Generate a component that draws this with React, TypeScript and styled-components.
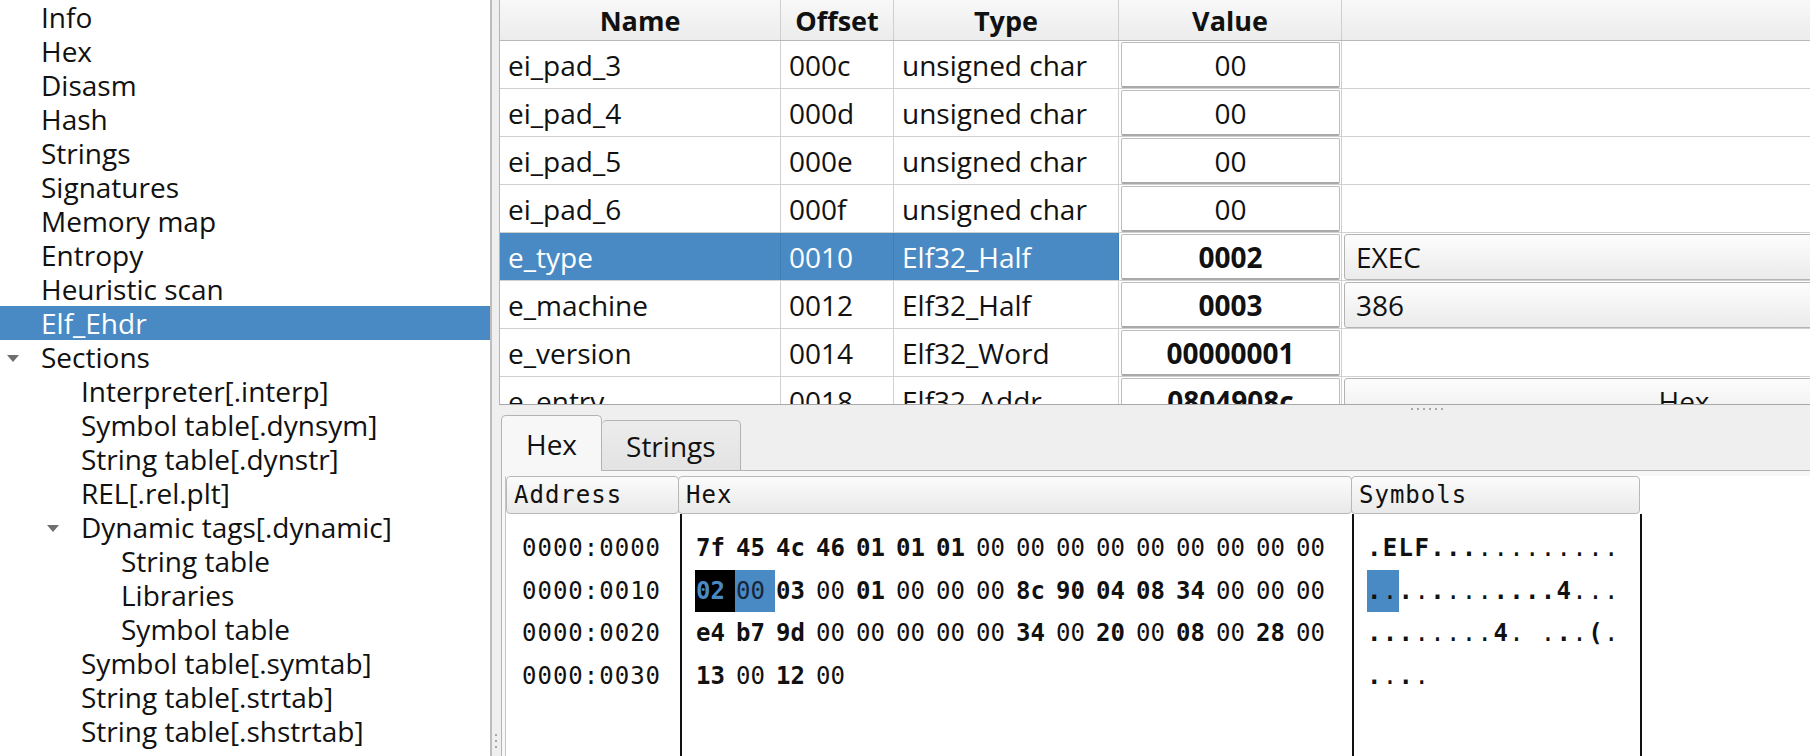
import React from 'react';
import styled, { createGlobalStyle, css } from 'styled-components';

const SANS = `"Open Sans", "Noto Sans", "DejaVu Sans", sans-serif`;
const MONO = `"DejaVu Sans Mono", "Liberation Mono", monospace`;
const BLUE = '#4a8ac4';

const GlobalStyle = createGlobalStyle`
  html, body { margin: 0; padding: 0; overflow: hidden; background: #efefef; }
  #root { width: 1810px; height: 756px; overflow: hidden; }
`;

const Window = styled.div`
  display: flex;
  width: 1810px;
  height: 756px;
  overflow: hidden;
  background: #efefef;
  font-family: ${SANS};
  color: #111;
`;

/* ---------- tree ---------- */
const TreePanel = styled.div`
  width: 490px;
  flex-shrink: 0;
  background: #fff;
  border-right: 2px solid #bdbdbd;
  display: flex;
  flex-direction: column;
`;

const TreeRow = styled.div<{ $depth: number; $selected?: boolean }>`
  height: 34px;
  display: flex;
  align-items: center;
  padding-left: ${(p) => 7 + p.$depth * 40}px;
  font-size: 28px;
  line-height: 34px;
  white-space: nowrap;
  color: ${(p) => (p.$selected ? '#fff' : '#111')};
  background: ${(p) => (p.$selected ? BLUE : 'transparent')};
`;

const ArrowSlot = styled.div`
  width: 34px;
  flex-shrink: 0;
  display: flex;
  align-items: center;
`;

const DownArrow = styled.div`
  width: 0;
  height: 0;
  border-left: 6px solid transparent;
  border-right: 6px solid transparent;
  border-top: 7px solid #6e6e6e;
  margin-top: 2px;
`;

const SplitterV = styled.div`
  width: 7px;
  flex-shrink: 0;
  display: flex;
  flex-direction: column;
  justify-content: flex-end;
  align-items: center;
  padding-bottom: 8px;
  gap: 4px;
`;

const Dot = styled.div`
  width: 2px;
  height: 2px;
  background: #a8a8a8;
`;

/* ---------- right pane ---------- */
const RightPane = styled.div`
  width: 1856px;
  flex-shrink: 0;
  display: flex;
  flex-direction: column;
`;

const COLS = '281px 113px 225px 223px 684px';

const TableFrame = styled.div`
  height: 405px;
  flex-shrink: 0;
  box-sizing: border-box;
  border-left: 1px solid #b4b4b4;
  border-bottom: 1px solid #a8a8a8;
  background: #fff;
  overflow: hidden;
`;

const HeaderRow = styled.div`
  display: grid;
  grid-template-columns: ${COLS};
  height: 41px;
  box-sizing: border-box;
  border-bottom: 1px solid #b9b9b9;
`;

const HeaderCell = styled.div`
  display: flex;
  align-items: center;
  justify-content: center;
  box-sizing: border-box;
  border-right: 1px solid #cfcfcf;
  background: linear-gradient(#f8f8f8, #ececec);
  font-weight: 700;
  font-size: 27px;
`;

const DataRow = styled.div`
  display: grid;
  grid-template-columns: ${COLS};
  height: 48px;
  box-sizing: border-box;
  border-bottom: 1px solid #d0d0d0;
`;

const Cell = styled.div<{ $selected?: boolean }>`
  display: flex;
  align-items: center;
  box-sizing: border-box;
  padding-left: 8px;
  border-right: 1px solid ${(p) => (p.$selected ? '#3f7db5' : '#d0d0d0')};
  font-size: 28px;
  white-space: nowrap;
  overflow: hidden;
  color: ${(p) => (p.$selected ? '#fff' : '#111')};
  background: ${(p) => (p.$selected ? BLUE : '#fff')};
`;

const WidgetCell = styled.div`
  display: flex;
  box-sizing: border-box;
  padding: 1px 1px 0 2px;
  border-right: 1px solid #d0d0d0;
  overflow: hidden;
`;

const ValueBox = styled.div<{ $bold?: boolean }>`
  flex: 1;
  display: flex;
  align-items: center;
  justify-content: center;
  box-sizing: border-box;
  background: #fff;
  border: 1px solid #bdbdbd;
  border-bottom: 2px solid #a9a9a9;
  border-radius: 2px;
  font-size: 28px;
  font-weight: ${(p) => (p.$bold ? 700 : 400)};
  white-space: nowrap;
`;

const ComboBox = styled.div<{ $center?: boolean }>`
  flex: 1;
  display: flex;
  align-items: center;
  box-sizing: border-box;
  padding-left: 11px;
  border: 1px solid #b3b3b3;
  border-radius: 3px;
  background: linear-gradient(#fdfdfd, #ebebeb);
  font-size: 28px;
  white-space: nowrap;
  ${(p) =>
    p.$center &&
    css`
      justify-content: center;
      padding-left: 0;
    `}
`;

const SplitterH = styled.div`
  height: 10px;
  flex-shrink: 0;
  display: flex;
  justify-content: center;
  align-items: flex-start;
  padding-top: 3px;
  box-sizing: border-box;
  gap: 4px;
`;

/* ---------- tabs ---------- */
const TabSection = styled.div`
  flex: 1;
  display: flex;
  flex-direction: column;
  margin-left: 2px;
  min-height: 0;
`;

const TabBar = styled.div`
  height: 55px;
  flex-shrink: 0;
  display: flex;
  align-items: flex-end;
`;

const Tab = styled.div<{ $active?: boolean }>`
  display: flex;
  align-items: center;
  justify-content: center;
  box-sizing: border-box;
  padding: 0 24px;
  font-size: 28px;
  border: 1px solid #b3b3b3;
  border-radius: 5px 5px 0 0;
  ${(p) =>
    p.$active
      ? css`
          height: 56px;
          margin-bottom: -1px;
          border-bottom: none;
          background: #f7f7f7;
          position: relative;
          z-index: 1;
        `
      : css`
          height: 50px;
          border-left: none;
          border-bottom: none;
          background: linear-gradient(#ececec, #e3e3e3);
        `}
`;

const TabPane = styled.div`
  flex: 1;
  border-top: 1px solid #b3b3b3;
  border-left: 1px solid #b3b3b3;
  background: #f7f7f7;
  padding: 5px 0 0 3px;
  display: flex;
  min-height: 0;
`;

const HexView = styled.div`
  flex: 1;
  background: #fff;
  border-left: 1px solid #c4c4c4;
  display: flex;
  flex-direction: column;
  font-family: ${MONO};
  font-size: 24px;
  color: #111;
`;

const HexHeader = styled.div`
  display: grid;
  grid-template-columns: 172px 673px 288px;
  height: 38px;
  flex-shrink: 0;
`;

const HexHeaderCell = styled.div`
  display: flex;
  align-items: center;
  box-sizing: border-box;
  padding-left: 7px;
  border: 1px solid #b8b8b8;
  border-radius: 4px;
  background: linear-gradient(#fbfbfb, #e9e9e9);
  letter-spacing: 1px;
  margin-right: -1px;
`;

const HexBody = styled.div`
  flex: 1;
  display: grid;
  grid-template-columns: 174px 672px 290px;
  align-items: stretch;
`;

const AddrCol = styled.div`
  padding: 13px 0 0 16px;
`;

const BytesCol = styled.div`
  border-left: 2px solid #111;
  padding: 13px 0 0 13px;
`;

const SymCol = styled.div`
  border-left: 2px solid #111;
  border-right: 2px solid #111;
  padding: 13px 0 0 13px;
`;

const HexLine = styled.div`
  height: 42.5px;
  display: flex;
  align-items: center;
  white-space: pre;
`;

const AddrText = styled.span`
  letter-spacing: 1px;
`;

const Byte = styled.span<{ $bold?: boolean; $mode?: 'cursor' | 'sel' | 'none' }>`
  display: inline-flex;
  align-items: center;
  width: 40px;
  height: 100%;
  padding-left: 1px;
  box-sizing: border-box;
  font-weight: ${(p) => (p.$bold ? 700 : 400)};
  ${(p) =>
    p.$mode === 'cursor' &&
    css`
      background: #000;
      color: ${BLUE};
    `}
  ${(p) =>
    p.$mode === 'sel' &&
    css`
      background: ${BLUE};
      color: #16263a;
    `}
`;

const SymChar = styled.span<{ $bold?: boolean; $sel?: boolean }>`
  display: inline-flex;
  align-items: center;
  width: 15.8px;
  height: 100%;
  font-weight: ${(p) => (p.$bold ? 700 : 400)};
  background: ${(p) => (p.$sel ? BLUE : 'transparent')};
`;

/* ---------- data ---------- */
type TreeItem = { label: string; depth: number; expanded?: boolean; selected?: boolean };

const treeItems: TreeItem[] = [
  { label: 'Info', depth: 0 },
  { label: 'Hex', depth: 0 },
  { label: 'Disasm', depth: 0 },
  { label: 'Hash', depth: 0 },
  { label: 'Strings', depth: 0 },
  { label: 'Signatures', depth: 0 },
  { label: 'Memory map', depth: 0 },
  { label: 'Entropy', depth: 0 },
  { label: 'Heuristic scan', depth: 0 },
  { label: 'Elf_Ehdr', depth: 0, selected: true },
  { label: 'Sections', depth: 0, expanded: true },
  { label: 'Interpreter[.interp]', depth: 1 },
  { label: 'Symbol table[.dynsym]', depth: 1 },
  { label: 'String table[.dynstr]', depth: 1 },
  { label: 'REL[.rel.plt]', depth: 1 },
  { label: 'Dynamic tags[.dynamic]', depth: 1, expanded: true },
  { label: 'String table', depth: 2 },
  { label: 'Libraries', depth: 2 },
  { label: 'Symbol table', depth: 2 },
  { label: 'Symbol table[.symtab]', depth: 1 },
  { label: 'String table[.strtab]', depth: 1 },
  { label: 'String table[.shstrtab]', depth: 1 },
];

type Field = {
  name: string;
  offset: string;
  type: string;
  value: string;
  bold?: boolean;
  extra?: string;
  extraCenter?: boolean;
  selected?: boolean;
};

const fields: Field[] = [
  { name: 'ei_pad_3', offset: '000c', type: 'unsigned char', value: '00' },
  { name: 'ei_pad_4', offset: '000d', type: 'unsigned char', value: '00' },
  { name: 'ei_pad_5', offset: '000e', type: 'unsigned char', value: '00' },
  { name: 'ei_pad_6', offset: '000f', type: 'unsigned char', value: '00' },
  { name: 'e_type', offset: '0010', type: 'Elf32_Half', value: '0002', bold: true, extra: 'EXEC', selected: true },
  { name: 'e_machine', offset: '0012', type: 'Elf32_Half', value: '0003', bold: true, extra: '386' },
  { name: 'e_version', offset: '0014', type: 'Elf32_Word', value: '00000001', bold: true },
  { name: 'e_entry', offset: '0018', type: 'Elf32_Addr', value: '0804908c', bold: true, extra: 'Hex', extraCenter: true },
];

const hexRows: string[][] = [
  '7f 45 4c 46 01 01 01 00 00 00 00 00 00 00 00 00'.split(' '),
  '02 00 03 00 01 00 00 00 8c 90 04 08 34 00 00 00'.split(' '),
  'e4 b7 9d 00 00 00 00 00 34 00 20 00 08 00 28 00'.split(' '),
  '13 00 12 00'.split(' '),
];

const CURSOR = 16;
const SELECTED = [16, 17];

const symbolOf = (b: string) => {
  const v = parseInt(b, 16);
  if (v === 0x20) return '\u00a0';
  if (v > 0x20 && v < 0x7f) return String.fromCharCode(v);
  return '.';
};

const Dots: React.FC<{ n: number }> = ({ n }) => (
  <>
    {Array.from({ length: n }).map((_, i) => (
      <Dot key={i} />
    ))}
  </>
);

export default function App() {
  return (
    <Window>
      <GlobalStyle />
      <TreePanel>
        {treeItems.map((t, i) => (
          <TreeRow key={i} $depth={t.depth} $selected={t.selected}>
            <ArrowSlot>{t.expanded && <DownArrow />}</ArrowSlot>
            {t.label}
          </TreeRow>
        ))}
      </TreePanel>
      <SplitterV>
        <Dots n={3} />
      </SplitterV>
      <RightPane>
        <TableFrame>
          <HeaderRow>
            <HeaderCell>Name</HeaderCell>
            <HeaderCell>Offset</HeaderCell>
            <HeaderCell>Type</HeaderCell>
            <HeaderCell>Value</HeaderCell>
            <HeaderCell />
          </HeaderRow>
          {fields.map((f) => (
            <DataRow key={f.name}>
              <Cell $selected={f.selected}>{f.name}</Cell>
              <Cell $selected={f.selected}>{f.offset}</Cell>
              <Cell $selected={f.selected}>{f.type}</Cell>
              <WidgetCell>
                <ValueBox $bold={f.bold}>{f.value}</ValueBox>
              </WidgetCell>
              <WidgetCell>
                {f.extra && <ComboBox $center={f.extraCenter}>{f.extra}</ComboBox>}
              </WidgetCell>
            </DataRow>
          ))}
        </TableFrame>
        <SplitterH>
          <Dots n={6} />
        </SplitterH>
        <TabSection>
          <TabBar>
            <Tab $active>Hex</Tab>
            <Tab>Strings</Tab>
          </TabBar>
          <TabPane>
            <HexView>
              <HexHeader>
                <HexHeaderCell>Address</HexHeaderCell>
                <HexHeaderCell>Hex</HexHeaderCell>
                <HexHeaderCell>Symbols</HexHeaderCell>
              </HexHeader>
              <HexBody>
                <AddrCol>
                  {hexRows.map((_, r) => (
                    <HexLine key={r}>
                      <AddrText>{`0000:00${(r * 16).toString(16).padStart(2, '0')}`}</AddrText>
                    </HexLine>
                  ))}
                </AddrCol>
                <BytesCol>
                  {hexRows.map((row, r) => (
                    <HexLine key={r}>
                      {row.map((b, c) => {
                        const idx = r * 16 + c;
                        const mode = idx === CURSOR ? 'cursor' : SELECTED.includes(idx) ? 'sel' : 'none';
                        return (
                          <Byte key={c} $bold={b !== '00'} $mode={mode}>
                            {b}
                          </Byte>
                        );
                      })}
                    </HexLine>
                  ))}
                </BytesCol>
                <SymCol>
                  {hexRows.map((row, r) => (
                    <HexLine key={r}>
                      {row.map((b, c) => (
                        <SymChar key={c} $bold={b !== '00'} $sel={SELECTED.includes(r * 16 + c)}>
                          {symbolOf(b)}
                        </SymChar>
                      ))}
                    </HexLine>
                  ))}
                </SymCol>
              </HexBody>
            </HexView>
          </TabPane>
        </TabSection>
      </RightPane>
    </Window>
  );
}
